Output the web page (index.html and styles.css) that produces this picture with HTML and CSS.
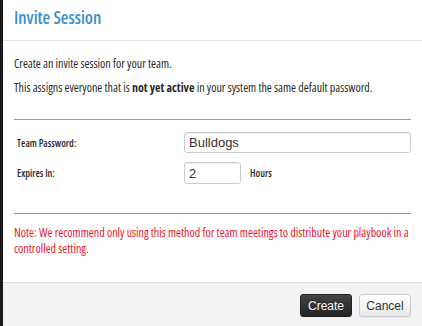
FILE: index.html
```html
<!DOCTYPE html>
<html lang="en">
<head>
    <meta charset="UTF-8">
    <title>Invite Session</title>
    <link rel="stylesheet" href="styles.css">
</head>
<body>
    <div class="modal">
        <div class="modal-header">
            <h3>Invite Session</h3>
        </div>
        <div class="modal-body">
            <p class="intro">Create an invite session for your team.</p>
            <p class="intro second">This assigns everyone that is <b>not yet active</b> in your system the same default password.</p>
            <hr>
            <div class="form-row first">
                <label for="teamPassword">Team Password:</label>
                <input type="text" id="teamPassword" class="input-wide" value="Bulldogs">
            </div>
            <div class="form-row">
                <label for="expires">Expires In:</label>
                <input type="text" id="expires" class="input-small" value="2">
                <span class="unit">Hours</span>
            </div>
            <hr class="lower">
            <p class="note">Note: We recommend only using this method for team meetings to distribute your playbook in a controlled setting.</p>
        </div>
        <div class="modal-footer">
            <button class="btn btn-dark">Create</button>
            <button class="btn">Cancel</button>
        </div>
    </div>
</body>
</html>
```

FILE: styles.css
```css
body {
    margin: 0;
    padding: 0;
    background: #1a1a1a;
    font-family: "Open Sans", "DejaVu Sans Condensed", sans-serif;
    font-stretch: 75%;
    height: 326px;
    overflow: hidden;
}
.modal {
    margin-left: 3px;
    background: white;
    height: 326px;
    display: flex;
    flex-direction: column;
}
.modal-header {
    height: 41px;
    border-bottom: 1px solid #e5e5e5;
    padding: 0 11px;
    box-sizing: border-box;
}
.modal-header h3 {
    margin: 0;
    padding-top: 5px;
    font-size: 17.5px;
    line-height: 24px;
    font-weight: 600;
    color: #3b8fcc;
}
.modal-body {
    padding: 15px 11px 0 11px;
    flex: 1;
    color: #2a2a2a;
    font-size: 12px;
}
.modal-body p {
    margin: 0;
    line-height: 16px;
}
.intro.second {
    margin-top: 8px;
}
.modal-body b {
    font-weight: 700;
}
hr {
    border: none;
    border-top: 1px solid #999;
    margin: 23px 0 0 0;
}
hr.lower {
    margin-top: 29px;
}
.form-row {
    display: flex;
    align-items: center;
    font-size: 10px;
    font-weight: 600;
    margin-top: 9px;
}
.form-row.first {
    margin-top: 12px;
}
.form-row label {
    width: 167px;
    padding-left: 3px;
}
.form-row input {
    font-family: "Liberation Sans", Arial, sans-serif;
    font-stretch: normal;
    font-size: 13px;
    color: #333;
    border: 1px solid #ccc;
    border-radius: 3px;
    padding: 0 4px;
    height: 21px;
    box-sizing: border-box;
    box-shadow: inset 0 1px 1px rgba(0,0,0,0.08);
}
.input-wide {
    flex: 1;
}
.input-small {
    width: 57px;
    height: 22px !important;
}
.unit {
    margin-left: 9px;
}
.modal-body .note {
    margin-top: 11px;
    color: #e8162e;
}
.modal-footer {
    height: 44px;
    box-sizing: border-box;
    background: #f3f3f3;
    border-top: 1px solid #ddd;
    display: flex;
    justify-content: flex-end;
    align-items: flex-start;
    gap: 7px;
    padding: 11px 11px 0 0;
}
.btn {
    font-family: "Liberation Sans", Arial, sans-serif;
    font-stretch: normal;
    font-size: 12px;
    height: 23px;
    width: 52px;
    border: 1px solid #ccc;
    border-radius: 3px;
    background: linear-gradient(#fff, #e8e8e8);
    color: #333;
    padding: 0;
    box-shadow: 0 1px 1px rgba(0,0,0,0.05);
}
.btn-dark {
    background: linear-gradient(#444, #222);
    border-color: #222;
    color: white;
    text-shadow: 0 -1px 0 rgba(0,0,0,0.4);
}
```
